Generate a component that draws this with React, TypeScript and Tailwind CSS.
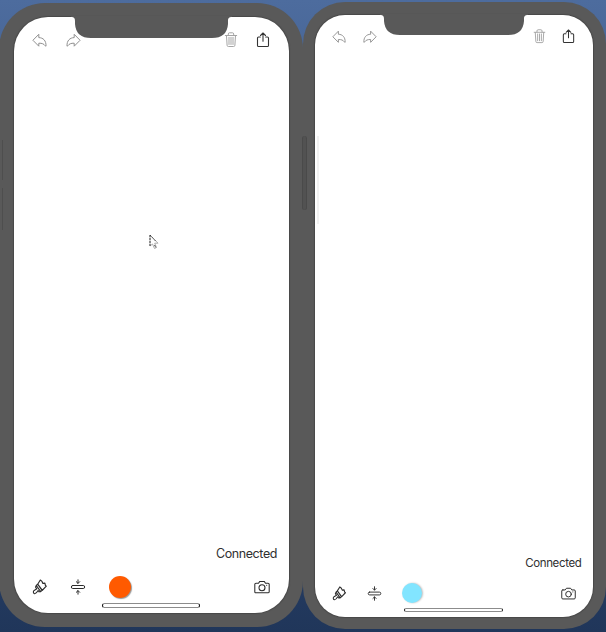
import { clsx } from "clsx";

const stroke = { fill: "none", stroke: "currentColor", strokeLinejoin: "round", strokeLinecap: "round" } as const;

function Undo({ className }: { className: string }) {
  return (
    <svg viewBox="0 0 16 16" className={className} {...stroke} strokeWidth={1}>
      <path d="M1.200 8 6.800 2.300v3.300c4.300.1 7.500 3 7.200 8.600-.6 0-.8-.3-1-.7-1.100-1.500-3-2.400-6.200-2.300v2.600Z" />
    </svg>
  );
}

function Trash({ className }: { className: string }) {
  return (
    <svg viewBox="0 0 16 16" className={className} {...stroke} strokeWidth={0.95}>
      <path d="M2.300 3.500h11.400M5.300 3.300V2c0-.8.500-1.200 1.200-1.200h3c.7 0 1.200.4 1.200 1.200v1.300M3.500 3.700l.6 9.600c0 .8.500 1.200 1.300 1.200h5.200c.8 0 1.300-.4 1.300-1.200l.6-9.600M6 5.300v7.200M8 5.300v7.200M10 5.300v7.200" />
    </svg>
  );
}

function Share({ className }: { className: string }) {
  return (
    <svg viewBox="0 0 16 16" className={className} {...stroke} strokeWidth={1.1}>
      <path d="M5.300 5H3.600c-.7 0-1.100.4-1.100 1.100v7.300c0 .7.400 1.100 1.100 1.100h8.800c.7 0 1.100-.4 1.100-1.100V6.100c0-.7-.4-1.100-1.100-1.100h-1.700M8 9.300V1.200M5.500 3.500 8 1l2.500 2.500" />
    </svg>
  );
}

function Brush({ className }: { className: string }) {
  return (
    <svg viewBox="0 0 16 16" className={className} {...stroke} strokeWidth={1.150}>
      <path d="M5.700 5.200 8.300 1l1.700 1.400.9 2 2-.3.500 2.200.9.900-4.200 4.300ZM4.300 6.500l1.400-1.300 4.500 6-1.500 1.400ZM4.300 6.500l-.7 1.600 1.200 1.700-2.600 1.600c-1.300 1-1 2.900.3 3.300 1.200.3 2-.6 3.600-3.200l1 1.300 1.600-.2" />
    </svg>
  );
}

function Thickness({ className }: { className: string }) {
  return (
    <svg viewBox="0 0 16 16" className={className} {...stroke} strokeWidth={1}>
      <rect x="1.300" y="6.500" width="13.400" height="3" rx="1.500" />
      <path d="M8 .8v3.500M6.300 2.700 8 4.400l1.700-1.700M8 15.200v-3.500M6.300 13.300 8 11.600l1.700 1.700" />
    </svg>
  );
}

function Camera({ className }: { className: string }) {
  return (
    <svg viewBox="0 0 16 16" className={className} {...stroke} strokeWidth={1.050}>
      <path d="M2 4.200h2.500l1.300-1.800h4.400l1.300 1.800H14c.8 0 1.200.4 1.200 1.100v7.400c0 .7-.4 1.100-1.200 1.100H2c-.8 0-1.200-.4-1.200-1.100V5.300c0-.7.400-1.100 1.200-1.100Z" />
      <circle cx="8" cy="8.700" r="3" />
      <path d="M12.600 6.300h.1" />
    </svg>
  );
}

interface PhoneStyle {
  frame: string;
  screen: string;
  notch: string;
  notchWidth: number;
  notchHeight: number;
  top: string;
  topGap: string;
  actionGap: string;
  icon: string;
  status: string;
  tools: string;
  toolGap: string;
  swatch: string;
  home: string;
}

const host: PhoneStyle = {
  frame: "-ml-px mt-[3px] h-[624px] w-[304px] rounded-[46px] pl-[14.5px] pt-[14px]",
  screen: "h-[596px] w-[275px] rounded-[34px]",
  notch: "left-[57px] -top-px",
  notchWidth: 161,
  notchHeight: 23,
  top: "pl-[18px] pr-[18px] pt-[15px]",
  topGap: "gap-[17px]",
  actionGap: "gap-4",
  icon: "size-4",
  status: "mb-[14px] pr-[11.5px] text-[12.5px] leading-4 tracking-[-0.42px]",
  tools: "h-[22px] pl-[18px] pr-[19px]",
  toolGap: "gap-[22.5px]",
  swatch: "size-[22px] bg-[#ff5a00] shadow-[1px_1px_1px_#999]",
  home: "h-[5px] mt-[5px] mb-[5px] ml-[88px] w-[98px]",
};

const guest: PhoneStyle = {
  frame: "mt-[2px] h-[627px] w-[303px] rounded-[42px] pl-[12px] pt-[13px]",
  screen: "h-[602px] w-[277.5px] rounded-[30px]",
  notch: "left-[65px] -top-px",
  notchWidth: 148,
  notchHeight: 22,
  top: "pl-[16.5px] pr-[16.5px] pt-[14px]",
  topGap: "gap-[15px]",
  actionGap: "gap-3.5",
  icon: "size-[15px]",
  status: "mb-[12px] pr-[11px] text-[11.5px] leading-4 tracking-[-0.36px]",
  tools: "h-5 pl-[16.5px] pr-[17px]",
  toolGap: "gap-[20.25px]",
  swatch: "size-5 bg-[#82e5ff] shadow-[1px_0_2px_#bbb]",
  home: "h-[4px] mt-[4.5px] mb-[5.5px] ml-[89px] w-[99px]",
};

function Notch({ w, h, className }: { w: number; h: number; className: string }) {
  const d = `M0 0V1C3 1 4 2 4 5V${h - 15}Q5 ${h - 1} 20 ${h - 1}H${w - 20}Q${w - 5} ${h - 1} ${w - 4} ${h - 15}V5C${w - 4} 2 ${w - 3} 1 ${w} 1V0Z`;
  return (
    <svg width={w} height={h} viewBox={`0 0 ${w} ${h}`} className={clsx("absolute", className)}>
      <path d={d} fill="#595959" />
    </svg>
  );
}

function Phone({ s }: { s: PhoneStyle }) {
  return (
    <section className={clsx("shrink-0 bg-[#595959]", s.frame)}>
      <div className={clsx("relative flex flex-col bg-white shadow-[0_0_1px_1px_#484848]", s.screen)}>
        <Notch w={s.notchWidth} h={s.notchHeight} className={s.notch} />
        <header className={clsx("flex items-center justify-between text-[#909090]", s.top)}>
          <div className={clsx("flex", s.topGap)}>
            <Undo className={s.icon} />
            <Undo className={clsx("-scale-x-100", s.icon)} />
          </div>
          <div className={clsx("flex", s.actionGap)}>
            <Trash className={clsx("text-[#a0a0a0]", s.icon)} />
            <Share className={clsx("text-[#333]", s.icon)} />
          </div>
        </header>
        <main className="flex-1" />
        <p className={clsx("text-right text-[#303030]", s.status)}>Connected</p>
        <footer className={clsx("flex items-center justify-between text-[#2c2c2c]", s.tools)}>
          <div className={clsx("flex items-center", s.toolGap)}>
            <Brush className={s.icon} />
            <Thickness className={s.icon} />
            <span className={clsx("rounded-full", s.swatch)} />
          </div>
          <Camera className={s.icon} />
        </footer>
        <div className={clsx("rounded-full border border-x-[#111] border-y-[#8c8c8c]", s.home)} />
      </div>
    </section>
  );
}

export default function App() {
  return (
    <div className="relative flex h-[632px] w-[606px] items-start overflow-hidden bg-gradient-to-b from-[#4d6c9e] to-[#20365a] font-[Inter,sans-serif]">
      <Phone s={host} />
      <Phone s={guest} />
      <div className="absolute left-[302px] top-[136px] h-[74px] w-[5px] rounded-sm border-x border-[#4a4a4a] bg-[#525252]" />
      <div className="absolute left-[317px] top-[136px] h-[88px] w-[2px] bg-[#f2f2f2]" />
      <div className="absolute left-0 top-[140px] h-[40px] w-[3px] border-r border-[#4e4e4e]" />
      <div className="absolute left-0 top-[188px] h-[42px] w-[3px] border-r border-[#4e4e4e]" />
      <svg viewBox="0 0 11 17" className="absolute left-[149px] top-[234px] h-[17px] w-[11px]">
        <path d="M1 1v11l2.500-2 2 4.500 2-1L5.700 9.200H9Z" fill="white" stroke="#999" strokeWidth="0.8" />
        <path d="M1 1v11M1 1l6 6.500M5.500 11l1.500 3" fill="none" stroke="#333" strokeWidth="0.9" strokeDasharray="2 1" />
      </svg>
    </div>
  );
}
